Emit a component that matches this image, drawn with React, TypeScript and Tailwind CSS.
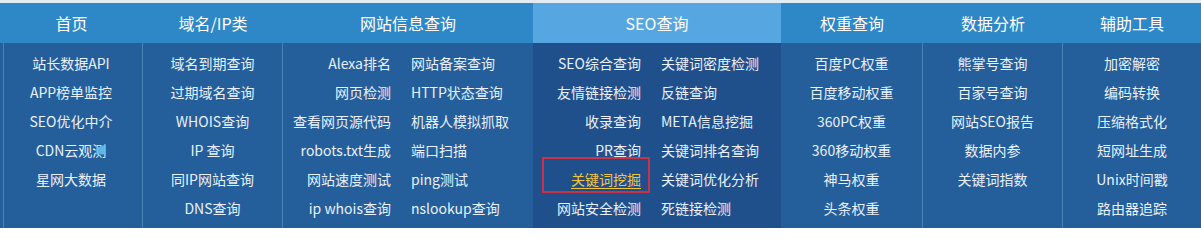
import React from "react";

type Col = {
  title: string;
  w: string;
  items?: string[];
  left?: string[];
  right?: string[];
  active?: boolean;
  sep?: boolean;
  first?: boolean;
};

const cols: Col[] = [
  { title: "首页", w: "w-[143px]", sep: true, first: true, items: ["站长数据API", "APP榜单监控", "SEO优化中介", "CDN云观测", "星网大数据"] },
  { title: "域名/IP类", w: "w-[140px]", sep: true, items: ["域名到期查询", "过期域名查询", "WHOIS查询", "IP 查询", "同IP网站查询", "DNS查询"] },
  {
    title: "网站信息查询",
    w: "w-[250px]",
    left: ["Alexa排名", "网页检测", "查看网页源代码", "robots.txt生成", "网站速度测试", "ip whois查询"],
    right: ["网站备案查询", "HTTP状态查询", "机器人模拟抓取", "端口扫描", "ping测试", "nslookup查询"],
  },
  {
    title: "SEO查询",
    w: "w-[248px]",
    active: true,
    left: ["SEO综合查询", "友情链接检测", "收录查询", "PR查询", "关键词挖掘", "网站安全检测"],
    right: ["关键词密度检测", "反链查询", "META信息挖掘", "关键词排名查询", "关键词优化分析", "死链接检测"],
  },
  { title: "权重查询", w: "w-[142px]", sep: true, items: ["百度PC权重", "百度移动权重", "360PC权重", "360移动权重", "神马权重", "头条权重"] },
  { title: "数据分析", w: "w-[140px]", sep: true, items: ["熊掌号查询", "百家号查询", "网站SEO报告", "数据内参", "关键词指数"] },
  { title: "辅助工具", w: "w-[138px]", items: ["加密解密", "编码转换", "压缩格式化", "短网址生成", "Unix时间戳", "路由器追踪"] },
];

function Item({ text, align }: { text: string; align: "center" | "left" | "right" }) {
  const hot = text === "关键词挖掘";
  const a = align === "center" ? "text-center" : align === "left" ? "text-left pl-[10px]" : "text-right pr-[10px]";
  return (
    <div className={`h-[29px] leading-[29px] text-[14px] whitespace-nowrap ${a}`}>
      <span className={hot ? "text-[#f5c53c] underline underline-offset-[3px]" : "text-[#e9f1fa]"}>{text}</span>
    </div>
  );
}

export default function App() {
  return (
    <div
      className="w-[1201px] h-[228px] overflow-hidden bg-[#245e9b] flex flex-col"
      style={{ fontFamily: '"Noto Sans CJK SC", "Noto Sans", sans-serif' }}
    >
      <div className="h-[3px] bg-[#e4ecf3]" />
      <div className="flex flex-1">
        {cols.map((c) => (
          <div key={c.title} className={`${c.w} flex flex-col shrink-0`}>
            <div
              className={`h-[40px] flex items-center justify-center text-[16px] text-white ${
                c.active ? "bg-[#56a7e1]" : "bg-[#2e87c6]"
              }`}
            >
              {c.title}
            </div>
            <div
              className={`relative flex-1 pt-[6px] ${c.active ? "bg-[#1f508c]" : "bg-[#245e9b]"} ${
                c.sep ? "border-r border-[#4a82ba]" : ""
              } ${
                c.first
                  ? "before:absolute before:left-[3px] before:top-0 before:bottom-0 before:w-px before:bg-[#4a82ba]"
                  : ""
              }`}
            >
              {c.items ? (
                c.items.map((t) => <Item key={t} text={t} align="center" />)
              ) : (
                <div className="grid grid-cols-[118px_1fr]">
                  <div className="flex flex-col">
                    {c.left!.map((t) => (
                      <Item key={t} text={t} align="right" />
                    ))}
                  </div>
                  <div className="flex flex-col">
                    {c.right!.map((t) => (
                      <Item key={t} text={t} align="left" />
                    ))}
                  </div>
                </div>
              )}
              {c.active && (
                <div className="absolute left-[9px] top-[114px] w-[108px] h-[36px] border-2 border-[#c93347] pointer-events-none" />
              )}
            </div>
          </div>
        ))}
      </div>
    </div>
  );
}
